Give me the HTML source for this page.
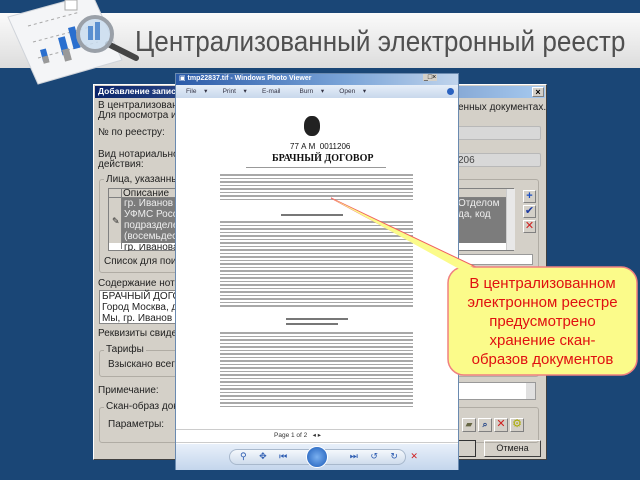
<!DOCTYPE html>
<html><head><meta charset="utf-8">
<style>
*{margin:0;padding:0;box-sizing:border-box}
body{width:640px;height:480px;overflow:hidden;background:#1a4676;font-family:"Liberation Sans","DejaVu Sans",sans-serif;position:relative}
.a{position:absolute}
.t{position:absolute;font-size:10px;color:#222;white-space:nowrap}
.dlg{left:93px;top:84px;width:454px;height:376px;background:#d4d0c8;border:1px solid #fff;border-right-color:#404040;border-bottom-color:#404040}
.fld{position:absolute;background:#d8d8d8;border:1px solid #b8b8b8;border-radius:2px}
.grp{position:absolute;border:1px solid #b0aca4;border-radius:3px}
.btn{position:absolute;width:13px;height:13px;background:#d4d0c8;border:1px solid #fff;border-right-color:#808080;border-bottom-color:#808080;font-size:11px;font-weight:bold;text-align:center;line-height:11px}
.ln{height:1.5px;background:#a8a8a8;margin-bottom:2px}
</style></head><body>
<div class="a" style="left:0;top:13px;width:640px;height:55px;background:linear-gradient(#fafafa,#e6e6e6 70%,#dcdcdc)"></div>
<svg class="a" style="left:0;top:0" width="150" height="90">
<polygon points="8,17 92,-6 122,60 38,84" fill="#f4f5f7" stroke="#d0d4da"/>
<g stroke="#a8a8a8" stroke-dasharray="3,3"><line x1="28" y1="26" x2="80" y2="12"/><line x1="33" y1="42" x2="90" y2="27"/><line x1="38" y1="58" x2="98" y2="42"/></g>
<rect x="40" y="50" width="6" height="12" fill="#2a6fcf" transform="rotate(-15 40 50)"/>
<rect x="42" y="57" width="6" height="7" fill="#999" transform="rotate(-15 42 57)"/>
<rect x="58" y="38" width="7" height="18" fill="#2a6fcf" transform="rotate(-15 58 38)"/>
<rect x="62" y="50" width="7" height="12" fill="#999" transform="rotate(-15 62 50)"/>
<rect x="68" y="28" width="7" height="22" fill="#2a6fcf" transform="rotate(-15 68 28)"/>
<rect x="65" y="0" width="12" height="10" fill="#fff" stroke="#aaa"/>
<line x1="108" y1="44" x2="136" y2="58" stroke="#444" stroke-width="6" stroke-linecap="round"/>
<circle cx="95" cy="34" r="17" fill="#c9dcef" fill-opacity=".85" stroke="#9aa0a8" stroke-width="4"/>
<rect x="88" y="26" width="5" height="14" fill="#5a8fd0"/><rect x="95" y="22" width="5" height="18" fill="#5a8fd0"/>
</svg>
<div class="t" style="left:135px;top:26px;font-size:29px;color:#505050;transform:scaleX(0.9);transform-origin:left">Централизованный электронный реестр</div>

<div class="a dlg">
 <div class="a" style="left:1px;top:1px;width:450px;height:12px;background:linear-gradient(90deg,#0a246a,#a6caf0)"></div>
 <div class="t" style="left:4px;top:1px;color:#fff;font-weight:bold;font-size:8.5px">Добавление записей в ц</div>
 <div class="btn" style="left:438px;top:2px;width:12px;height:10px;font-size:9px;line-height:8px">×</div>
 <div class="t" style="left:4px;top:15px">В централизованны</div>
 <div class="t" style="left:4px;top:25px">Для просмотра инфо</div>
 <div class="t" style="left:364px;top:17px">енных документах.</div>
 <div class="t" style="left:4px;top:42px">№ по реестру:</div>
 <div class="fld" style="left:362px;top:41px;width:85px;height:14px"></div>
 <div class="t" style="left:4px;top:64px">Вид нотариального</div>
 <div class="t" style="left:4px;top:74px">действия:</div>
 <div class="fld" style="left:362px;top:68px;width:85px;height:14px"></div>
 <div class="t" style="left:364px;top:70px;color:#444">206</div>
 <div class="grp" style="left:5px;top:94px;width:440px;height:94px"></div>
 <div class="t" style="left:10px;top:89px;background:#d4d0c8;padding:0 2px">Лица, указанные в</div>
 <div class="a" style="left:14px;top:103px;width:406px;height:63px;background:#fff;border:1px solid #808080"></div>
 <div class="a" style="left:15px;top:104px;width:398px;height:9px;background:#d4d0c8;border-bottom:1px solid #808080"></div>
 <div class="a" style="left:27px;top:104px;width:1px;height:60px;background:#808080"></div>
 <div class="t" style="left:29px;top:103px">Описание</div>
 <div class="a" style="left:28px;top:113px;width:385px;height:45px;background:#7c7c7c"></div>
 <div class="a" style="left:15px;top:113px;width:12px;height:45px;background:#d4d0c8"></div>
 <div class="t" style="left:18px;top:131px;font-size:9px">✎</div>
 <div class="t" style="left:30px;top:113px;color:#eee;line-height:11px">гр. Иванов Ив<br>УФМС России<br>подразделен<br>(восемьдесят)</div>
 <div class="t" style="left:364px;top:113px;color:#eee;line-height:11px">Отделом<br>да, код</div>
 <div class="t" style="left:30px;top:159px;line-height:8px;height:7px;overflow:hidden">гр. Иванова С</div>
 <div class="a" style="left:412px;top:104px;width:9px;height:61px;background:#e8e8e8;border-left:1px solid #ccc"></div>
 <div class="btn" style="left:429px;top:105px;color:#1c4fc0">+</div>
 <div class="btn" style="left:429px;top:120px;color:#1c3aa0">✔</div>
 <div class="btn" style="left:429px;top:135px;color:#d02020">✕</div>
 <div class="t" style="left:10px;top:171px">Список для поиска</div>
 <div class="a" style="left:364px;top:169px;width:75px;height:11px;background:#fff;border:1px solid #999"></div>
 <div class="t" style="left:4px;top:193px">Содержание нотари</div>
 <div class="a" style="left:5px;top:205px;width:400px;height:34px;background:#fff;border:1px solid #888"></div>
 <div class="t" style="left:8px;top:206px;line-height:11px">БРАЧНЫЙ ДОГОВО<br>Город Москва, двад<br>Мы, гр. Иванов Ива</div>
 <div class="t" style="left:4px;top:243px">Реквизиты свидете</div>
 <div class="grp" style="left:5px;top:265px;width:440px;height:27px"></div>
 <div class="t" style="left:10px;top:259px;background:#d4d0c8;padding:0 2px">Тарифы</div>
 <div class="t" style="left:14px;top:274px">Взыскано всего:</div>
 <div class="t" style="left:4px;top:300px">Примечание:</div>
 <div class="a" style="left:362px;top:297px;width:80px;height:18px;background:#fff;border:1px solid #999"></div>
 <div class="a" style="left:432px;top:298px;width:9px;height:16px;background:#e0e0e0"></div>
 <div class="grp" style="left:5px;top:322px;width:440px;height:36px"></div>
 <div class="t" style="left:10px;top:316px;background:#d4d0c8;padding:0 2px">Скан-образ докум</div>
 <div class="t" style="left:14px;top:334px">Параметры:</div>
 <div class="btn" style="left:368px;top:333px;width:14px;height:14px;font-size:9px;color:#664">▰</div>
 <div class="btn" style="left:384px;top:333px;width:14px;height:14px;font-size:9px;color:#248">⌕</div>
 <div class="btn" style="left:400px;top:333px;width:14px;height:14px;color:#d02020">✕</div>
 <div class="btn" style="left:416px;top:333px;width:14px;height:14px;color:#aa0">⚙</div>
 <div class="a" style="left:300px;top:355px;width:82px;height:17px;border:1px solid #333;background:#d4d0c8"></div>
 <div class="a" style="left:390px;top:355px;width:57px;height:17px;border:1px solid #fff;border-right-color:#404040;border-bottom-color:#404040;font-size:9px;text-align:center;line-height:15px;color:#222">Отмена</div>
</div>

<div class="a" style="left:175px;top:73px;width:284px;height:397px;background:#fff;border:1px solid #6a8ab0">
 <div class="a" style="left:0;top:0;width:282px;height:11px;background:linear-gradient(90deg,#2a5aa8,#7aa4d8 60%,#c0d4ec)"></div>
 <div class="t" style="left:3px;top:0;font-size:7px;color:#fff;font-weight:bold">▣ tmp22837.tif - Windows Photo Viewer</div>
 <div class="t" style="left:247px;top:0;font-size:7px;background:#d4d0c8;color:#000;padding:0 1px">_□×</div>
 <div class="a" style="left:0;top:11px;width:282px;height:13px;background:linear-gradient(#e6eef8,#c8d8ec)"></div>
 <div class="t" style="left:10px;top:13px;font-size:6.5px;color:#334;word-spacing:2px">File &nbsp;▾ &nbsp;&nbsp;&nbsp;Print &nbsp;▾ &nbsp;&nbsp;&nbsp;E-mail &nbsp;&nbsp;&nbsp;&nbsp;Burn &nbsp;▾ &nbsp;&nbsp;&nbsp;Open &nbsp;▾</div>
 <div class="a" style="left:271px;top:14px;width:7px;height:7px;border-radius:50%;background:#2a62c0"></div>
 <div class="a" style="left:128px;top:42px;width:16px;height:20px;border-radius:45%;background:#222"></div>
 <div class="t" style="left:114px;top:68px;font-size:8px;color:#111">77 А М &nbsp;0011206</div>
 <div class="t" style="left:96px;top:79px;font-size:10px;font-weight:bold;font-family:'Liberation Serif',serif;color:#111">БРАЧНЫЙ ДОГОВОР</div>
 <div class="a" style="left:70px;top:93px;width:140px;height:1px;background:#999"></div>
 <div class="a" style="left:44px;top:100px;width:193px">
  <div class="ln"></div><div class="ln"></div><div class="ln"></div><div class="ln"></div><div class="ln"></div><div class="ln"></div><div class="ln"></div><div class="ln"></div>
 </div>
 <div class="a" style="left:105px;top:140px;width:62px;height:2px;background:#777"></div>
 <div class="a" style="left:44px;top:147px;width:193px">
  <div class="ln"></div><div class="ln"></div><div class="ln"></div><div class="ln"></div><div class="ln"></div><div class="ln"></div><div class="ln"></div><div class="ln"></div><div class="ln"></div><div class="ln"></div><div class="ln"></div><div class="ln"></div><div class="ln"></div><div class="ln"></div><div class="ln"></div><div class="ln"></div><div class="ln"></div><div class="ln"></div><div class="ln"></div><div class="ln"></div><div class="ln"></div><div class="ln"></div><div class="ln"></div><div class="ln"></div><div class="ln"></div>
 </div>
 <div class="a" style="left:110px;top:244px;width:62px;height:2px;background:#777"></div>
 <div class="a" style="left:110px;top:249px;width:52px;height:2px;background:#777"></div>
 <div class="a" style="left:44px;top:258px;width:193px">
  <div class="ln"></div><div class="ln"></div><div class="ln"></div><div class="ln"></div><div class="ln"></div><div class="ln"></div><div class="ln"></div><div class="ln"></div><div class="ln"></div><div class="ln"></div><div class="ln"></div><div class="ln"></div><div class="ln"></div><div class="ln"></div><div class="ln"></div><div class="ln"></div><div class="ln"></div><div class="ln"></div><div class="ln"></div><div class="ln"></div><div class="ln"></div><div class="ln"></div>
 </div>
 <div class="a" style="left:0;top:355px;width:282px;height:14px;background:#fff;border-top:1px solid #ccc;border-bottom:1px solid #ccc"></div>
 <div class="t" style="left:98px;top:357px;font-size:6.5px;color:#333">Page 1 of 2 &nbsp;&nbsp;◂ ▸</div>
 <div class="a" style="left:0;top:370px;width:282px;height:26px;background:linear-gradient(#e8f0fa,#c4d6ec)"></div>
 <div class="a" style="left:53px;top:375px;width:177px;height:16px;border-radius:8px;background:linear-gradient(#f4f8fc,#cfdcec);border:1px solid #a8b8cc"></div>
 <div class="a" style="left:130px;top:372px;width:22px;height:22px;border-radius:50%;background:radial-gradient(#7ab0f0,#1a5ab8);border:1px solid #fff"></div>
 <div class="t" style="left:64px;top:377px;font-size:9px;color:#2a5ab0;word-spacing:10px">⚲ ✥ ⏮ &nbsp;&nbsp;&nbsp;&nbsp;⏭ ↺ ↻ <span style="color:#d02020">✕</span></div>
</div>

<svg class="a" style="left:0;top:0" width="640" height="480">
<polygon points="331,198 460,268 478,268" fill="#fbfb8a" stroke="#f06060" stroke-width="1"/>
<rect x="448" y="267" width="189" height="108" rx="16" fill="#fbfb8a" stroke="#f08080" stroke-width="1.5"/>
<polygon points="331,198 461,270 478,270" fill="#fbfb8a"/>
</svg>
<div class="t" style="left:448px;top:274px;width:189px;text-align:center;color:#e01010;font-size:15px;line-height:19px;white-space:normal">В централизованном<br>электронном реестре<br>предусмотрено<br>хранение скан-<br>образов документов</div>
</body></html>
